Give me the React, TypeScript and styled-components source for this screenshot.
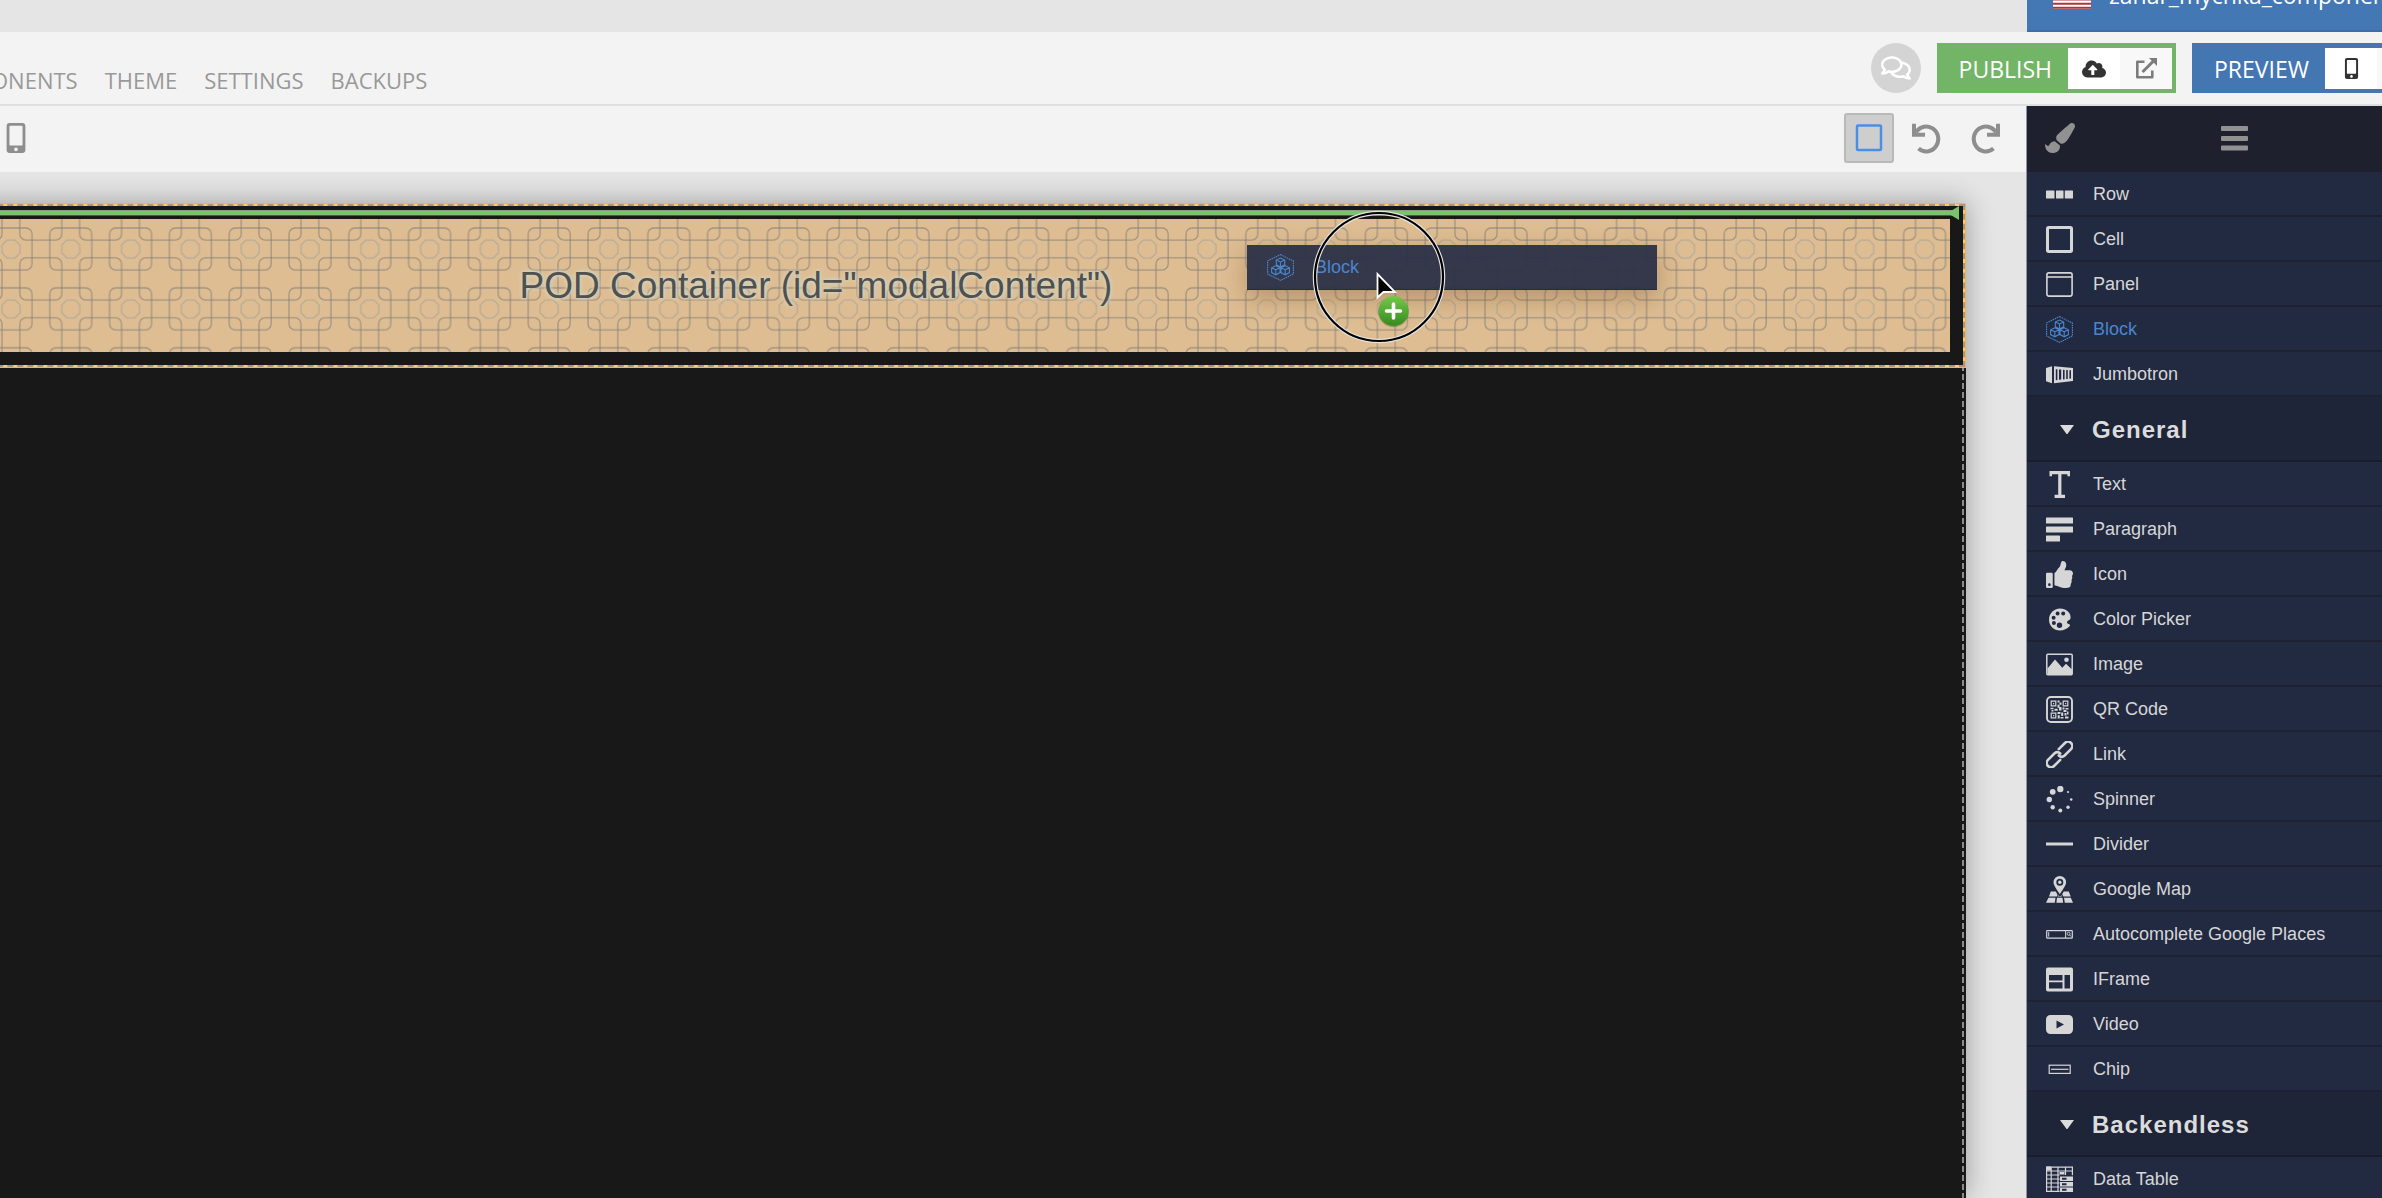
import React from "react";
import styled, { createGlobalStyle, css } from "styled-components";
import {
  FaCloudUploadAlt,
  FaMobileAlt,
  FaPaintBrush,
  FaRegComments,
  FaThumbsUp,
} from "react-icons/fa";

const sans = `"Liberation Sans", Arial, Helvetica, sans-serif`;
const open = `"Open Sans", "Noto Sans", sans-serif`;

const GlobalStyle = createGlobalStyle`
  * { box-sizing: border-box; }
  html, body { margin: 0; height: 100%; overflow: hidden; background: #e5e5e5; }
  button { margin: 0; padding: 0; border: 0; background: none; font: inherit; color: inherit; cursor: pointer; }
  svg { display: block; flex: none; }
`;

/* ---------- page frame ---------- */

const Viewport = styled.div`
  height: 100vh;
  overflow: hidden;
  font-family: ${sans};
`;

const Page = styled.div`
  display: flex;
  flex-direction: column;
  height: calc(100vh + 40px);
  margin: -40px -55px 0 0;
`;

const TopStrip = styled.div`
  display: flex;
  flex: none;
  justify-content: flex-end;
  height: 72px;
  background: #e5e5e5;
`;

const AppSwitcher = styled.button`
  display: flex;
  align-items: center;
  gap: 18px;
  width: 410px;
  padding: 0 26px;
  background: #4478b4;
  border-bottom: 2px solid #3f6ea6;
  color: #fff;
  font-family: ${open};
  font-size: 23px;
  white-space: nowrap;
`;

const Header = styled.header`
  display: flex;
  flex: none;
  align-items: center;
  justify-content: space-between;
  height: 74px;
  padding-right: 4px;
  background: #f3f3f3;
  border-bottom: 2px solid #dfdfdf;
`;

const Nav = styled.nav`
  display: flex;
  gap: 27px;
  margin-left: -73px;
  padding-top: 24px;
`;

const NavLink = styled.a`
  color: #999;
  font-family: ${open};
  font-size: 22px;
  line-height: 30px;
  text-decoration: none;
`;

const HeaderActions = styled.div`
  display: flex;
  align-items: center;
  gap: 16px;
`;

const ChatButton = styled.button`
  display: grid;
  place-items: center;
  width: 50px;
  height: 50px;
  border-radius: 50%;
  background: #d4d4d4;
  color: #fff;
  font-size: 30px;
`;

const ActionGroup = styled.div<{ $color: string }>`
  display: flex;
  align-items: stretch;
  height: 50px;
  padding: 5px 4px 4px 0;
  background: ${(p) => p.$color};
`;

const ActionLabel = styled.button`
  padding: 0 16px 0 22px;
  color: #fff;
  font-family: ${open};
  font-size: 23px;
  line-height: 40px;
`;

const ActionIcon = styled.button<{ $dim?: boolean }>`
  display: grid;
  place-items: center;
  width: 52px;
  background: ${(p) => (p.$dim ? "#f8f8f8" : "#fff")};
  color: ${(p) => (p.$dim ? "#7c7c7c" : "#333")};
`;

const Body = styled.div`
  display: grid;
  grid-template-columns: minmax(0, 1fr) 410px;
  flex: 1;
  min-height: 0;
`;

/* ---------- workspace ---------- */

const Workspace = styled.main`
  position: relative;
  display: flex;
  flex-direction: column;
  min-width: 0;
  overflow: hidden;
  background: #e5e5e5;
`;

const Toolbar = styled.div`
  position: relative;
  z-index: 1;
  display: flex;
  flex: none;
  align-items: center;
  justify-content: space-between;
  height: 66px;
  padding: 0 17px 2px 1px;
  background: #f3f3f3;
  color: #8e8e8e;
`;

const ToolGroup = styled.div`
  display: flex;
  align-items: center;
  gap: 8px;
`;

const ToolButton = styled.button<{ $active?: boolean }>`
  display: grid;
  place-items: center;
  width: 50px;
  height: 50px;
  border-radius: 3px;
  ${(p) =>
    p.$active &&
    css`
      background: #cecece;
      border: 2px solid #b9b9b9;
      color: #4a90e2;
    `}
`;

const DeviceButton = styled.button`
  display: grid;
  place-items: center;
  font-size: 30px;
`;

const Artboard = styled.section`
  display: flow-root;
  flex: 1;
  margin: 31px 61px 0 -333px;
  background: #181818;
  border-right: 1px solid #181818;
  box-shadow: 0 0 26px rgba(0, 0, 0, 0.32);
  background-image: repeating-linear-gradient(to bottom, #8a8a8a 0 6px, transparent 6px 9px);
  background-repeat: no-repeat;
  background-size: 2px 100%;
  background-position: right 1px top 0;
`;

const PodOutline = styled.div`
  margin: 1px 0 0;
  padding: 4px 13px 13px;
  border: 2px dashed #a8997a;
  background: linear-gradient(#181818, #181818) padding-box, linear-gradient(#ffc970, #ffc970) border-box;
  box-shadow: 0 0 0 1px #f0b45c;
`;

const DropLine = styled.div`
  position: relative;
  height: 6px;
  margin: 0 -9px 3px;
  background: #7ac26c;
  border-top: 1px solid #8f9a8c;
  border-bottom: 1px solid #2f6e28;
`;

const DropArrow = styled.svg`
  position: absolute;
  right: 0;
  top: -5px;
`;

const Pod = styled.div`
  position: relative;
  display: grid;
  place-items: center;
  height: 133px;
  background: #debd93;
`;

const PodPattern = styled.svg`
  position: absolute;
  inset: 0;
  width: 100%;
  height: 100%;
`;

const PodLabel = styled.span`
  position: relative;
  color: #505050;
  font-size: 37px;
  line-height: 44px;
  white-space: nowrap;
  text-shadow: 0 0 4px #cfd6c4, 0 0 4px #cfd6c4;
`;

const Ghost = styled.div`
  position: absolute;
  left: 1247px;
  top: 139px;
  z-index: 2;
  display: flex;
  align-items: center;
  gap: 21px;
  width: 410px;
  height: 45px;
  padding-left: 20px;
  background: rgba(43, 48, 70, 0.94);
  border-bottom: 1px solid #2a2a3a;
  box-shadow: 0 8px 24px rgba(90, 50, 10, 0.3);
  color: #4a86cc;
  font-size: 18px;
`;

const Pointer = styled.svg`
  position: absolute;
  left: 1312px;
  top: 104px;
  z-index: 3;
`;

/* ---------- sidebar ---------- */

const Sidebar = styled.aside`
  overflow: hidden;
  background: #222a42;
  box-shadow: -1px 0 0 #8d95a5;
  z-index: 2;
`;

const Tabs = styled.div`
  display: flex;
  align-items: center;
  height: 66px;
  padding: 0 0 2px 18px;
  background: #1e202e;
  color: #919191;
`;

const Tab = styled.button`
  display: flex;
  align-items: center;
  width: 176px;
  height: 64px;
  font-size: 30px;
`;

const List = styled.ul`
  margin: 0;
  padding: 0;
  list-style: none;
`;

const Item = styled.button<{ $active?: boolean }>`
  display: flex;
  align-items: center;
  gap: 20px;
  width: 100%;
  height: 45px;
  padding: 2px 0 0 19px;
  border-bottom: 2px solid #1d2131;
  color: ${(p) => (p.$active ? "#4a86cc" : "#d6d6d6")};
  font-size: 18px;
  text-align: left;
`;

const IconSlot = styled.span`
  display: grid;
  place-items: center;
  width: 27px;
  height: 27px;
`;

const SectionTitle = styled.button`
  display: flex;
  align-items: center;
  gap: 18px;
  width: 100%;
  height: 65px;
  padding: 2px 0 0 33px;
  background: #1e2538;
  border-bottom: 2px solid #181d2e;
  color: #dcdcdc;
  font-size: 24px;
  font-weight: 700;
  letter-spacing: 1px;
`;

/* ---------- icons ---------- */

const Icon = ({ children }: { children: React.ReactNode }) => (
  <svg width="27" height="27" viewBox="0 0 27 27" fill="currentColor" aria-hidden="true">
    {children}
  </svg>
);

const RowIcon = () => (
  <Icon>
    <rect x="0" y="9.5" width="8.5" height="8" rx=".6" />
    <rect x="10" y="9.5" width="7.5" height="8" rx=".6" />
    <rect x="18.8" y="9.5" width="8.2" height="8" rx=".6" />
  </Icon>
);

const CellIcon = () => (
  <Icon>
    <rect x="1.5" y="1.5" width="24" height="24" rx="1.2" fill="none" stroke="currentColor" strokeWidth="3" />
  </Icon>
);

const PanelIcon = () => (
  <Icon>
    <rect x=".9" y="1.9" width="25.2" height="23.2" rx="2" fill="none" stroke="currentColor" strokeWidth="1.6" />
    <path d="M1 6h25" stroke="currentColor" strokeWidth="1.6" />
  </Icon>
);

const cube = (x: number, y: number) =>
  `M${x} ${y - 4.6}l4.2 2v4.8l-4.2 2.2l-4.2-2.2v-4.8zM${x - 4.2} ${y - 2.6}l4.2 2l4.2-2M${x} ${y - 0.6}v5`;

const BlockIcon = () => (
  <Icon>
    <g fill="none" stroke="currentColor">
      <path d="M13.5 .6L26.4 7v13L13.5 26.4L.6 20V7z" strokeWidth="1.1" strokeDasharray="1.6 .7" />
      <path d={cube(13.5, 8.6) + cube(8.8, 16.4) + cube(18.2, 16.4)} strokeWidth="1.1" />
    </g>
  </Icon>
);

const JumbotronIcon = () => (
  <Icon>
    <path d="M0 7l6-1.8v17L0 20.2z" />
    <path
      fillRule="evenodd"
      d="M8 5.2L27 7v13L8 22.2zM9.8 8.2v11l1.600-.2V8.300zM13 8.500v10.200l2.200-.2V8.600zM17 8.800v9.600l1.600-.2V8.900zM20.200 9v9.100l1.600-.2V9.100zM23.400 9.200v8.500l1.600-.2V9.300z"
    />
  </Icon>
);

const TextIcon = () => (
  <Icon>
    <path d="M3.5 0h20.5v5.200h-2.600V3.200h-6v20.600h3.600V27H8.600v-3.200h3.600V3.200H6v2H3.500z" />
  </Icon>
);

const ParagraphIcon = () => (
  <Icon>
    <rect y="1.5" width="27" height="6" rx=".6" />
    <rect y="10.5" width="27" height="6" rx=".6" />
    <rect y="19.5" width="14" height="6" rx=".6" />
  </Icon>
);

const PaletteIcon = () => (
  <Icon>
    <path
      fillRule="evenodd"
      d="M14 2.500C7.800 2.500 3 7.500 3 13.700C3 19.800 7.900 24.500 14 24.500c3.700 0 7.200-1.500 9.600-4.200c.8-.9.300-1.900-.9-2.200c-1.800-.4-2.300-1.800-1.100-3c.8-.8 2.400-1 2.900-2.600C25.500 7 20.300 2.500 14 2.500zM11.600 5.600a2 2 0 1 1 0 4a2 2 0 1 1 0-4zM17.200 5.600a2 2 0 1 1 0 4a2 2 0 1 1 0-4zM7.600 9.800a2 2 0 1 1 0 4a2 2 0 1 1 0-4zM7.900 15a2 2 0 1 1 0 4a2 2 0 1 1 0-4zM13.500 16.600a2.700 2.700 0 1 1 0 5.400a2.700 2.700 0 1 1 0-5.400z"
    />
  </Icon>
);

const ImageIcon = () => (
  <Icon>
    <rect x=".8" y="3.3" width="25.4" height="20.4" rx="1" fill="none" stroke="currentColor" strokeWidth="1.5" />
    <path d="M1.5 17.5L9 8.5l7.3 8.2l3.7-4l6 5.8v5.500H1.500z" />
    <circle cx="20.5" cy="8.7" r="2.3" />
  </Icon>
);

const QrIcon = () => (
  <Icon>
    <g fill="none" stroke="currentColor">
      <rect x="1" y="1" width="25" height="25" rx="4" strokeWidth="1.9" />
      <path d="M5.2 5.2h4.600v4.600H5.200zM17.200 5.200h4.600v4.600h-4.600zM5.200 17.200h4.600v4.600H5.200z" strokeWidth="1.2" />
    </g>
    <path d="M7 7h1.200v1.200H7zM19 7h1.200v1.200H19zM7 19h1.200v1.200H7zM11.500 4.500h2v2h-2zM13.500 6.500h2v2.200h-2zM11.500 8.700h2v3h-2zM4.500 11.700h3v1.500h-3zM8.500 12.700h3.200v2H8.500zM5.500 14h2v1.500h-2zM13 11h2.500v3.500H13zM16.500 11.500h2v2h-2zM19.500 12h3v1.500h-3zM17.500 14h3v2h-3zM11.500 16h3v2h-3zM15.200 16.500h2v3.500h-2zM11.700 19.300h2v3.200h-2zM18.500 17h2v2.500h-2zM21 15.500h1.500v3H21zM14.500 21h3v1.500h-3zM19 20.500h3.500v2H19z" />
  </Icon>
);

const LinkIcon = () => (
  <Icon>
    <g fill="none" stroke="currentColor" strokeWidth="2.6" strokeLinecap="round" transform="rotate(-45 13.5 13.5)">
      <path d="M11.5 17.8H2.8A4.3 4.3 0 0 1 2.8 9.2H12.2A4.300 4.300 0 0 1 16 13.300" transform="translate(-1.3)" />
      <path d="M15.5 9.2H24.2A4.3 4.3 0 0 1 24.2 17.8H14.8A4.300 4.300 0 0 1 11 13.700" transform="translate(1.3)" />
    </g>
  </Icon>
);

const SpinnerIcon = () => (
  <Icon>
    <circle cx="14.3" cy="3" r="3.2" />
    <circle cx="6.7" cy="5.8" r="2.9" />
    <circle cx="3.3" cy="13.5" r="2.7" />
    <circle cx="6.7" cy="21.3" r="2.2" />
    <circle cx="14.3" cy="24.5" r="2" />
    <circle cx="22" cy="21.3" r="1.7" />
    <circle cx="25.2" cy="13.5" r="1.3" />
    <circle cx="22" cy="6" r="1.1" />
  </Icon>
);

const DividerIcon = () => (
  <Icon>
    <rect y="11.5" width="27" height="3" />
  </Icon>
);

const MapIcon = () => (
  <Icon>
    <path
      fillRule="evenodd"
      d="M13.8 0a6.3 6.3 0 0 1 6.3 6.3c0 3.6-4 8-6.3 12c-2.300-4-6.300-8.400-6.300-12A6.300 6.300 0 0 1 13.800 0zm0 2.800a3.500 3.500 0 1 0 0 7a3.500 3.500 0 1 0 0-7z"
    />
    <circle cx="13.8" cy="6.3" r="1.7" />
    <path d="M4.8 15.5h5l1.600 3l-.2 2H3zM17.800 15.500h5l1.900 5h-7.300l-1.300-2.300zM12 19.300l1.800 1l1.800-1l.3 1.200h-4zM2.500 21.700h7l-.7 5H0zM11 21.700h5.500l.6 5h-6.700zM18 21.700h6.800l2.200 5h-8.200z" />
  </Icon>
);

const AutocompleteIcon = () => (
  <Icon>
    <g fill="none" stroke="currentColor">
      <rect x=".7" y="9.7" width="25.6" height="7.4" rx=".6" strokeWidth="1.2" />
      <path d="M2.7 11.2v4.400M19.600 10v7" strokeWidth="1" />
      <circle cx="22.6" cy="12.8" r="1.5" strokeWidth=".9" />
      <path d="M23.6 13.9l1.600 1.700" strokeWidth=".9" />
    </g>
  </Icon>
);

const IFrameIcon = () => (
  <Icon>
    <path
      fillRule="evenodd"
      d="M2 1.5h23a2 2 0 0 1 2 2v20a2 2 0 0 1-2 2H2a2 2 0 0 1-2-2v-20a2 2 0 0 1 2-2zM3 9v5.500h13.500V9zM3 16.200v6.300h13.500v-6.300zM18.500 9v13.500H24V9z"
    />
  </Icon>
);

const VideoIcon = () => (
  <Icon>
    <path
      fillRule="evenodd"
      d="M4.5 4h18a4.5 4.5 0 0 1 4.500 4.500v10a4.500 4.500 0 0 1-4.500 4.500h-18A4.500 4.500 0 0 1 0 18.500v-10A4.500 4.500 0 0 1 4.500 4zM10.500 9.500v8l7.500-4z"
    />
  </Icon>
);

const ChipIcon = () => (
  <Icon>
    <g fill="none" stroke="currentColor" strokeWidth="1.2">
      <rect x="3.2" y="9.2" width="21" height="8.2" />
      <path d="M5 13.3h17.400" />
    </g>
  </Icon>
);

const DataTableIcon = () => (
  <Icon>
    <g fill="none" stroke="currentColor" strokeWidth="1.2">
      <path d="M.6 1.2h25.8v8M.6 1.2v24.200h13M5.200 1v24.400M12 1v24.400M19.500 1v8M.6 5h25.800M.6 9h13M.6 13h13M.6 17h13M.6 21h13" />
    </g>
    <path d="M0 .6h5v4H0zM13.5 6h5v2.500h-5z" />
    <path
      fillRule="evenodd"
      d="M14 10.5h13V15H14zM14 16h13v4.500H14zM14 21.500h13V26H14zM16 11.800v1.900h4.500v-1.900zM16 17.300v1.900h4.500v-1.900zM16 22.800v1.900h4.500v-1.900z"
    />
  </Icon>
);

const RotateIcon = ({ flip }: { flip?: boolean }) => (
  <svg width="30" height="31" viewBox="0 0 30 31" fill="none" stroke="currentColor" aria-hidden="true">
    <g transform={flip ? "translate(30 0) scale(-1 1)" : undefined}>
      <path d="M4 9.5A12 12.5 0 1 1 6.5 25.5" strokeWidth="4" />
      <path d="M2 .8V11.800H13" strokeWidth="4" />
    </g>
  </svg>
);

const ExternalIcon = () => (
  <svg width="21" height="21" viewBox="0 0 21 21" fill="none" stroke="currentColor" aria-hidden="true">
    <path d="M8.5 3.8H1.300V19.300H16.300V12.500" strokeWidth="2.6" strokeLinejoin="round" />
    <path d="M6.5 14L18 2.500" strokeWidth="3" />
    <path d="M13 0h8v8z" fill="currentColor" stroke="none" />
  </svg>
);

const MenuIcon = () => (
  <svg width="27" height="25" viewBox="0 0 27 25" fill="currentColor" aria-hidden="true">
    <rect width="27" height="5" rx="1" />
    <rect y="10" width="27" height="5" rx="1" />
    <rect y="19.5" width="27" height="5" rx="1" />
  </svg>
);

const Caret = () => (
  <svg width="14" height="9" viewBox="0 0 14 9" fill="currentColor" aria-hidden="true">
    <path d="M0 0h14L7.8 8.400a1 1 0 0 1-1.600 0z" />
  </svg>
);

const FlagIcon = () => (
  <svg width="38" height="27" viewBox="0 0 38 27" aria-hidden="true">
    <rect width="38" height="27" rx="1" fill="#fff" />
    <path d="M0 1h38M0 5.200h38M0 9.400h38M0 13.500h38M0 17.600h38M0 21.700h38M0 25.800h38" stroke="#b0343c" strokeWidth="2" />
    <rect width="17" height="14" fill="#3c3b6e" />
  </svg>
);

/* ---------- data ---------- */

type Entry = { label: string; icon: React.ReactNode; active?: boolean };

const layoutItems: Entry[] = [
  { label: "Row", icon: <RowIcon /> },
  { label: "Cell", icon: <CellIcon /> },
  { label: "Panel", icon: <PanelIcon /> },
  { label: "Block", icon: <BlockIcon />, active: true },
  { label: "Jumbotron", icon: <JumbotronIcon /> },
];

const generalItems: Entry[] = [
  { label: "Text", icon: <TextIcon /> },
  { label: "Paragraph", icon: <ParagraphIcon /> },
  { label: "Icon", icon: <FaThumbsUp size={27} /> },
  { label: "Color Picker", icon: <PaletteIcon /> },
  { label: "Image", icon: <ImageIcon /> },
  { label: "QR Code", icon: <QrIcon /> },
  { label: "Link", icon: <LinkIcon /> },
  { label: "Spinner", icon: <SpinnerIcon /> },
  { label: "Divider", icon: <DividerIcon /> },
  { label: "Google Map", icon: <MapIcon /> },
  { label: "Autocomplete Google Places", icon: <AutocompleteIcon /> },
  { label: "IFrame", icon: <IFrameIcon /> },
  { label: "Video", icon: <VideoIcon /> },
  { label: "Chip", icon: <ChipIcon /> },
];

const backendlessItems: Entry[] = [{ label: "Data Table", icon: <DataTableIcon /> }];

const Items = ({ items }: { items: Entry[] }) => (
  <List>
    {items.map((it) => (
      <li key={it.label}>
        <Item $active={it.active}>
          <IconSlot>{it.icon}</IconSlot>
          {it.label}
        </Item>
      </li>
    ))}
  </List>
);

export default function App() {
  return (
    <Viewport>
      <GlobalStyle />
      <Page>
        <TopStrip>
          <AppSwitcher>
            <FlagIcon />
            zahar_mychka_components
          </AppSwitcher>
        </TopStrip>

        <Header>
          <Nav>
            {["COMPONENTS", "THEME", "SETTINGS", "BACKUPS"].map((t) => (
              <NavLink key={t} href="#">
                {t}
              </NavLink>
            ))}
          </Nav>
          <HeaderActions>
            <ChatButton aria-label="Chat">
              <FaRegComments />
            </ChatButton>
            <ActionGroup $color="#73b566">
              <ActionLabel>PUBLISH</ActionLabel>
              <ActionIcon aria-label="Upload">
                <FaCloudUploadAlt size={24} />
              </ActionIcon>
              <ActionIcon $dim aria-label="Open published page">
                <ExternalIcon />
              </ActionIcon>
            </ActionGroup>
            <ActionGroup $color="#4476b2">
              <ActionLabel>PREVIEW</ActionLabel>
              <ActionIcon aria-label="Mobile preview">
                <FaMobileAlt size={21} />
              </ActionIcon>
              <ActionIcon $dim aria-label="Open preview">
                <ExternalIcon />
              </ActionIcon>
            </ActionGroup>
          </HeaderActions>
        </Header>

        <Body>
          <Workspace>
            <Toolbar>
              <DeviceButton aria-label="Phone layout">
                <FaMobileAlt />
              </DeviceButton>
              <ToolGroup>
                <ToolButton $active aria-label="Show outlines">
                  <svg width="28" height="28" viewBox="0 0 28 28" fill="none" stroke="currentColor">
                    <rect x="2" y="1.5" width="24" height="24.5" rx="1" strokeWidth="2.5" />
                  </svg>
                </ToolButton>
                <ToolButton aria-label="Undo">
                  <RotateIcon />
                </ToolButton>
                <ToolButton aria-label="Redo">
                  <RotateIcon flip />
                </ToolButton>
              </ToolGroup>
            </Toolbar>

            <Artboard>
              <PodOutline>
                <DropLine>
                  <DropArrow width="9" height="14" viewBox="0 0 9 14" aria-hidden="true">
                    <path d="M9 0v14L0 8.5v-3z" fill="#7ac26c" />
                  </DropArrow>
                </DropLine>
                <Pod>
                  <PodPattern aria-hidden="true">
                    <defs>
                      <pattern id="tiles" width="59.8" height="59.9" patternUnits="userSpaceOnUse">
                        <g fill="none" stroke="#7d7a74" strokeOpacity=".62" strokeWidth="1.3">
                          <rect x="9" y="9" width="42" height="42" rx="6" />
                          <rect x="-21" y="-21" width="42" height="42" rx="6" />
                          <rect x="38.8" y="-21" width="42" height="42" rx="6" />
                          <rect x="-21" y="38.9" width="42" height="42" rx="6" />
                          <rect x="38.8" y="38.9" width="42" height="42" rx="6" />
                          <path d="M26 21h8l5 5v8l-5 5h-8l-5-5v-8z" stroke="#a09f98" />
                        </g>
                      </pattern>
                    </defs>
                    <rect width="100%" height="100%" fill="url(#tiles)" />
                  </PodPattern>
                  <PodLabel>POD Container (id="modalContent")</PodLabel>
                </Pod>
              </PodOutline>
            </Artboard>

            <Ghost>
              <BlockIcon />
              Block
            </Ghost>
            <Pointer width="134" height="134" viewBox="0 0 134 134" aria-hidden="true">
              <defs>
                <linearGradient id="plus" x1="0" y1="0" x2="0" y2="1">
                  <stop offset="0" stopColor="#74c94a" />
                  <stop offset="1" stopColor="#358a1f" />
                </linearGradient>
              </defs>
              <circle cx="67" cy="67" r="64" fill="none" stroke="#e8e4e0" strokeWidth="4.5" />
              <circle cx="67" cy="67" r="64" fill="none" stroke="#000" strokeWidth="2.2" />
              <path d="M65.5 64v23.500l6-5.500h11.500z" fill="#000" stroke="#fff" strokeWidth="1.8" />
              <circle cx="81.5" cy="102" r="15.3" fill="#2c5c1c" fillOpacity=".35" />
              <circle cx="81.5" cy="101" r="15" fill="url(#plus)" />
              <path d="M74.5 101h14M81.500 94v14" stroke="#fff" strokeWidth="3.6" strokeLinecap="round" />
            </Pointer>
          </Workspace>

          <Sidebar>
            <Tabs>
              <Tab aria-label="Styles">
                <FaPaintBrush />
              </Tab>
              <Tab aria-label="Components">
                <MenuIcon />
              </Tab>
            </Tabs>
            <Items items={layoutItems} />
            <SectionTitle>
              <Caret />
              General
            </SectionTitle>
            <Items items={generalItems} />
            <SectionTitle>
              <Caret />
              Backendless
            </SectionTitle>
            <Items items={backendlessItems} />
          </Sidebar>
        </Body>
      </Page>
    </Viewport>
  );
}
